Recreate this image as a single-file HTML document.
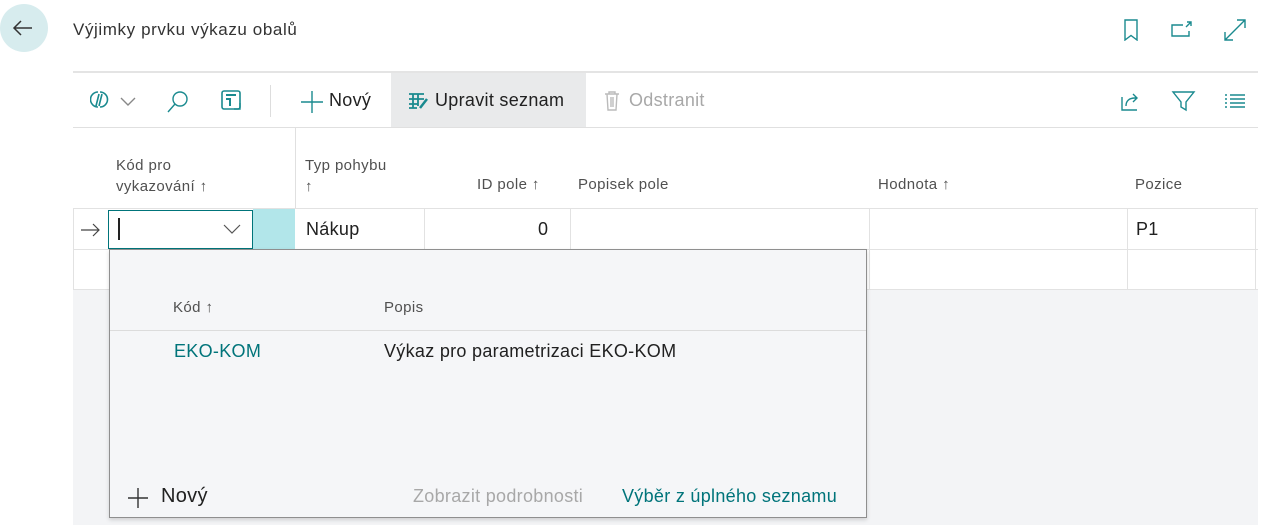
<!DOCTYPE html>
<html><head><meta charset="utf-8"><style>
*{margin:0;padding:0;box-sizing:border-box}
body{width:1280px;height:525px;background:#fff;font-family:"Liberation Sans",sans-serif;color:#212121;position:relative;overflow:hidden;font-size:15px}
.a{position:absolute;white-space:nowrap}
.h{color:#505050;font-size:15px;letter-spacing:0.4px}
.t{font-size:18px;letter-spacing:0.3px}
.teal{color:#00747a}
svg{position:absolute;fill:none;stroke:#1a8a8f;stroke-width:1.4}
</style></head><body>
<div class="a" style="left:0;width:48px;height:48px;border-radius:50%;background:#d7ecee;top:4px"></div>
<svg style="left:10px;top:16px" width="26" height="24" viewBox="0 0 26 24"><path d="M22 12H4M11 5L4 12l7 7" stroke="#333" stroke-width="1.5"/></svg>
<div class="a" style="left:73px;top:20px;font-size:17px;letter-spacing:0.6px;color:#333">Výjimky prvku výkazu obalů</div>
<svg style="left:1122px;top:19px" width="20" height="22" viewBox="0 0 20 22"><path d="M3 1h12v20l-6-4.5L3 21z"/></svg>
<svg style="left:1170px;top:20px" width="24" height="20" viewBox="0 0 24 20"><path d="M13 5H2v11h17v-5M17 2h4v4M21 2l-5 5"/></svg>
<svg style="left:1222px;top:17px" width="26" height="26" viewBox="0 0 26 26"><path d="M3 23L23 3M15 3h8v8M3 15v8h8"/></svg>
<div class="a" style="left:73px;top:71px;width:1185px;height:2px;background:#e4e4e4"></div>
<div class="a" style="left:73px;top:127px;width:1185px;height:1px;background:#e0e0e0"></div>
<svg style="left:90px;top:89px" width="22" height="22" viewBox="0 0 22 22"><path d="M8 3a7 7 0 1 0 0 15M10 3a7 7 0 1 1 0 15M9 5l-3 12M12 5l-3 12" stroke-width="1.6"/></svg>
<svg style="left:119px;top:96px" width="18" height="10" viewBox="0 0 18 10"><path d="M2 2l7 7 7-7" stroke="#888"/></svg>
<svg style="left:165px;top:89px" width="26" height="26" viewBox="0 0 26 26"><circle cx="15" cy="10" r="7"/><path d="M10 15l-7 8"/></svg>
<svg style="left:220px;top:89px" width="24" height="24" viewBox="0 0 24 24"><rect x="2" y="2" width="18" height="18" rx="2" stroke-width="1.6"/><path d="M6 6h10M6 10h4v7" stroke-width="2"/><path d="M20 14v6h-6" stroke-width="1.4"/></svg>
<div class="a" style="left:270px;top:85px;width:1px;height:32px;background:#ddd"></div>
<svg style="left:300px;top:90px" width="24" height="24" viewBox="0 0 24 24"><path d="M12 1v22M1 12h22" stroke="#1a8a8f"/></svg>
<div class="a t" style="left:329px;top:90px">Nový</div>
<div class="a" style="left:391px;top:73px;width:195px;height:54px;background:#e9eaeb"></div>
<svg style="left:407px;top:91px" width="22" height="20" viewBox="0 0 22 20"><path d="M2 3h15M2 8h15M2 13h9M2 17h8M6 3v14M11 3v12" stroke-width="1.8"/><path d="M20 8l-7 9" stroke-width="2.5"/></svg>
<div class="a t" style="left:435px;top:90px">Upravit seznam</div>
<svg style="left:603px;top:90px" width="18" height="22" viewBox="0 0 18 22"><path d="M2 4h14M6 4V2h6v2M4 4l1 16h8l1-16M8 7v10M10 7v10" stroke="#bbb"/></svg>
<div class="a t" style="left:629px;top:90px;color:#a8a8a8">Odstranit</div>
<svg style="left:1119px;top:89px" width="24" height="24" viewBox="0 0 24 24"><path d="M3 8v13h15M7 17c0-5 3-8 9-8h1M14 5l4 4-4 4"/></svg>
<svg style="left:1171px;top:89px" width="26" height="24" viewBox="0 0 26 24"><path d="M2 3h21l-8 10v8l-5-3v-5z"/></svg>
<svg style="left:1224px;top:93px" width="22" height="16" viewBox="0 0 22 16"><path d="M1 2h2M6 2h15M1 6h2M6 6h15M1 10h2M6 10h15M1 14h2M6 14h15"/></svg>
<div class="a" style="left:295px;top:128px;width:1px;height:81px;background:#e0e0e0"></div>
<div class="a h" style="left:116px;top:155px;line-height:21px">Kód pro<br>vykazování ↑</div>
<div class="a h" style="left:305px;top:155px;line-height:21px">Typ pohybu<br>↑</div>
<div class="a h" style="left:477px;top:176px">ID pole ↑</div>
<div class="a h" style="left:578px;top:176px">Popisek pole</div>
<div class="a h" style="left:878px;top:176px">Hodnota ↑</div>
<div class="a h" style="left:1135px;top:176px">Pozice</div>
<div class="a" style="left:73px;top:289px;width:1185px;height:236px;background:#f3f4f6"></div>
<div class="a" style="left:73px;top:208px;width:1185px;height:82px;border:1px solid #e2e2e2;border-width:1px 0 1px 1px;background:#fff"></div>
<div class="a" style="left:73px;top:249px;width:1185px;height:1px;background:#e2e2e2"></div>
<div class="a" style="left:424px;top:209px;width:1px;height:40px;background:#e2e2e2"></div>
<div class="a" style="left:570px;top:209px;width:1px;height:40px;background:#e2e2e2"></div>
<div class="a" style="left:869px;top:209px;width:1px;height:81px;background:#e2e2e2"></div>
<div class="a" style="left:1127px;top:209px;width:1px;height:81px;background:#e2e2e2"></div>
<div class="a" style="left:1255px;top:209px;width:1px;height:81px;background:#e2e2e2"></div>
<svg style="left:80px;top:222px" width="22" height="16" viewBox="0 0 22 16"><path d="M1 8h18M13 2l6 6-6 6" stroke="#444" stroke-width="1.2"/></svg>
<div class="a" style="left:108px;top:210px;width:145px;height:39px;border:1px solid #00747a;background:#fff"></div>
<div class="a" style="left:118px;top:218px;width:1.5px;height:22px;background:#222"></div>
<svg style="left:222px;top:223px" width="20" height="12" viewBox="0 0 20 12"><path d="M2 2l8 8 8-8" stroke="#555" stroke-width="1.2"/></svg>
<div class="a" style="left:253px;top:209px;width:42px;height:40px;background:#b2e6ea"></div>
<div class="a t" style="left:306px;top:219px">Nákup</div>
<div class="a t" style="left:538px;top:219px">0</div>
<div class="a t" style="left:1136px;top:219px">P1</div>
<div class="a" style="left:109px;top:249px;width:758px;height:269px;background:#f5f6f8;border:1px solid #8f8f8f;box-shadow:0 2px 4px rgba(0,0,0,.15)"></div>
<div class="a h" style="left:173px;top:299px">Kód ↑</div>
<div class="a h" style="left:384px;top:299px">Popis</div>
<div class="a" style="left:110px;top:330px;width:756px;height:1px;background:#dcdcdc"></div>
<div class="a teal t" style="left:174px;top:341px">EKO-KOM</div>
<div class="a t" style="left:384px;top:341px">Výkaz pro parametrizaci EKO-KOM</div>
<svg style="left:126px;top:486px" width="24" height="24" viewBox="0 0 24 24"><path d="M12 2v20M2 12h20" stroke="#333"/></svg>
<div class="a" style="left:161px;top:485px;font-size:20px;letter-spacing:0.3px">Nový</div>
<div class="a t" style="left:413px;top:486px;color:#a8a8a8">Zobrazit podrobnosti</div>
<div class="a teal t" style="left:622px;top:486px">Výběr z úplného seznamu</div>
</body></html>
